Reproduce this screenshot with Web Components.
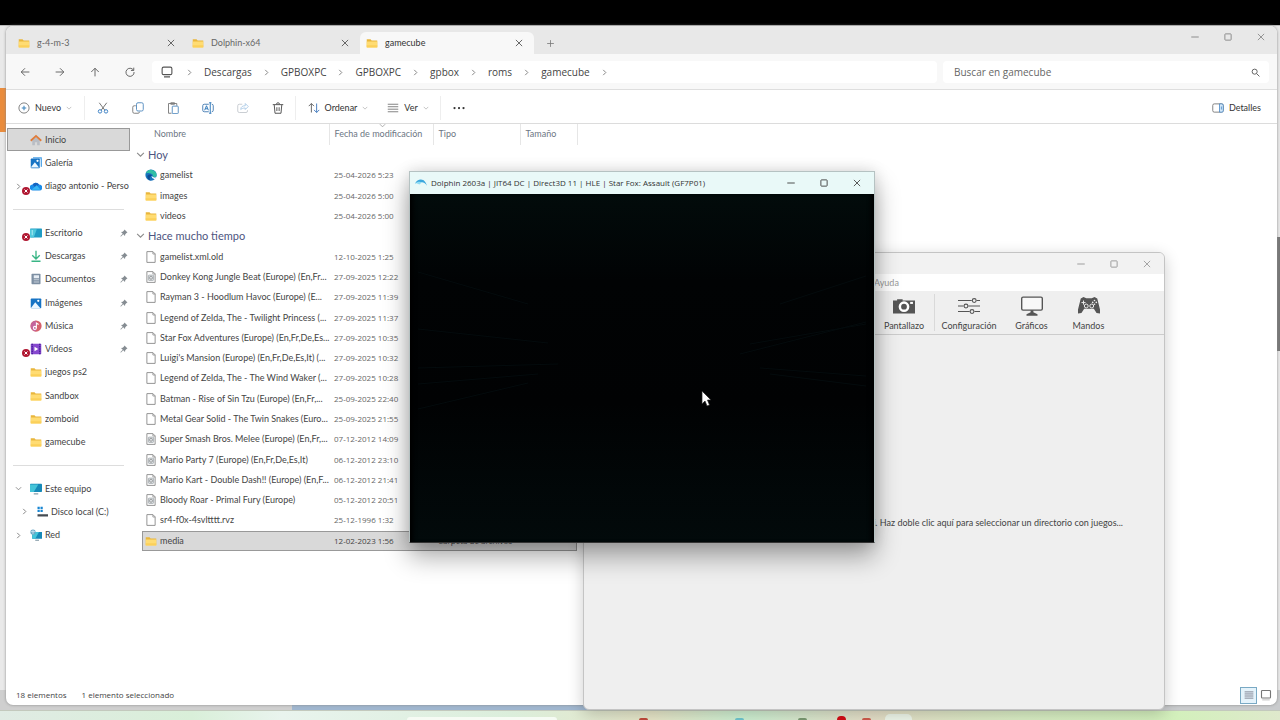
<!DOCTYPE html>
<html lang="es">
<head>
<meta charset="utf-8">
<title>gamecube</title>
<style>
html, body { margin: 0; height: 100%; overflow: hidden; background: #000; }
body { font-family: Lato, "Open Sans", sans-serif; font-size: 9px; line-height: 14px; color: #444; --small: 8px/14px "Open Sans", sans-serif; }
</style>
</head>
<body>
<desk-top>
  <explorer-window slot="windows" class="explorer"></explorer-window>
  <emulator-window slot="windows" class="emulator"></emulator-window>
  <game-window slot="windows" class="game"></game-window>
</desk-top>
<script>
const ICONS = {
  folder: '<path d="M1 3h5l1.500 1.500H15V13H1z" fill="#e9b63c"/><path d="M1 6h14v8H1z" fill="#ffdc73"/><path d="M1 11h14v3H1z" fill="#fbd05a"/>',
  close: '<path d="M3 3l10 10M13 3L3 13" stroke="currentColor" stroke-width="1.400"/>',
  min: '<path d="M2 8h12" stroke="currentColor" stroke-width="1.500"/>',
  max: '<rect x="3" y="3" width="10" height="10" rx="1" stroke="currentColor" stroke-width="1.500"/>',
  plus: '<path d="M8 2v12M2 8h12" stroke="currentColor" stroke-width="1.400"/>',
  back: '<path d="M15 8H2M8 2L2 8l6 6" stroke="currentColor" stroke-width="1.400"/>',
  forward: '<path d="M1 8h13M8 2l6 6-6 6" stroke="currentColor" stroke-width="1.400"/>',
  up: '<path d="M8 15V2M2 8l6-6 6 6" stroke="currentColor" stroke-width="1.400"/>',
  reload: '<path d="M13.500 5A6.500 6.500 0 1 0 14.500 8M14 1v4.500H9.500" stroke="currentColor" stroke-width="1.400"/>',
  monitor: '<rect x="1.500" y="1.500" width="13" height="10" rx="2" stroke="currentColor" stroke-width="1.500"/><path d="M4 14.500h8" stroke="currentColor" stroke-width="1.500"/>',
  right: '<path d="M5 2l6 6-6 6" stroke="currentColor" stroke-width="2"/>',
  down: '<path d="M2 5l6 6 6-6" stroke="currentColor" stroke-width="1.800"/>',
  search: '<circle cx="6.500" cy="6.500" r="4.500" stroke="currentColor" stroke-width="1.600"/><path d="M10 10l5 5" stroke="currentColor" stroke-width="1.600"/>',
  add: '<circle cx="8" cy="8" r="6.800" stroke="#777" stroke-width="1.200"/><path d="M8 5v6M5 8h6" stroke="#3b83bd" stroke-width="1.400"/>',
  cut: '<path d="M3 1l7.500 10M13 1L5.500 11" stroke="#666" stroke-width="1.200"/><circle cx="4" cy="12.500" r="2.300" stroke="#3d82c4" stroke-width="1.300"/><circle cx="12" cy="12.500" r="2.300" stroke="#3d82c4" stroke-width="1.300"/>',
  copy: '<path d="M5 5H3a2 2 0 0 0-2 2v6a2 2 0 0 0 2 2h5a2 2 0 0 0 2-2" stroke="#777" stroke-width="1.200"/><rect x="6" y="1" width="9" height="11" rx="2" stroke="#5c91c2" stroke-width="1.300"/>',
  paste: '<path d="M6 15H2V2h11v3M5 1h5v2H5z" stroke="#777" stroke-width="1.200"/><rect x="7" y="5.500" width="8" height="10" rx="1" stroke="#5c91c2" stroke-width="1.300"/>',
  rename: '<path d="M9 3H3a2 2 0 0 0-2 2v6a2 2 0 0 0 2 2h6M13 3a2 2 0 0 1 2 2v6a2 2 0 0 1-2 2" stroke="#4d82b5" stroke-width="1.300"/><path d="M11 1v14M9.500 1h3M9.500 15h3M3.500 11L6 5l2.500 6M4.500 9h3" stroke="#2f78ba" stroke-width="1.300"/>',
  share: '<path d="M7 3H3a2 2 0 0 0-2 2v7a2 2 0 0 0 2 2h9a2 2 0 0 0 2-2v-1" stroke="#c9cdd2" stroke-width="1.300"/><path d="M5 10c0-4 3-5 6-5V2l4 4-4 4V8C8 8 6 9 5 10z" stroke="#a9c9e6" stroke-width="1.200"/>',
  trash: '<path d="M1 3.500h14M6 3a2 2 0 0 1 4 0M3 4l1 11h8l1-11M6.500 7v5M9.500 7v5" stroke="#555" stroke-width="1.300"/>',
  sort: '<path d="M4.500 14V2M1 5.500L4.500 2 8 5.500" stroke="#666" stroke-width="1.300"/><path d="M11.500 2v12M8 10.500l3.500 3.500 3.500-3.500" stroke="#4a80c0" stroke-width="1.300"/>',
  lines: '<path d="M1 3h14M1 6.300h14M1 9.600h14M1 13h14" stroke="currentColor" stroke-width="1.200"/>',
  dots: '<g fill="#333"><circle cx="2" cy="8" r="1.500"/><circle cx="8" cy="8" r="1.500"/><circle cx="14" cy="8" r="1.500"/></g>',
  panel: '<rect x="1" y="2.500" width="14" height="11" rx="2" stroke="#777" stroke-width="1.200"/><path d="M10 2.500h3a2 2 0 0 1 2 2v7a2 2 0 0 1-2 2h-3z" stroke="#3d82c4" fill="#d5e8f8"/><path d="M12.500 6v4" stroke="#3d82c4"/>',
  home: '<path d="M3 8v7h3.500v-4h3v4H13V8L8 3.500z" fill="#b9bdc4"/><path d="M1 9l7-6.500L15 9" stroke="#e07c3a" stroke-width="2.400"/>',
  gallery: '<path d="M3 2h12v11h1V3z" fill="#6ab0ea"/><path d="M4 1h11v12" stroke="#4aa0e6" stroke-width="1.500"/><rect x="1" y="2" width="12" height="13" rx="1" fill="#1673c4"/><path d="M1 14l5.500-7L12 14z" fill="#eaf6ff"/><circle cx="10" cy="5" r="1.500" fill="#fff"/>',
  cloud: '<path d="M4 14a4 4 0 0 1-.5-8A5 5 0 0 1 12 6a4 4 0 0 1 .5 8z" fill="#1a8be8"/><path d="M3.500 6A5 5 0 0 1 12 6L7 10z" fill="#1663c0"/><path d="M2 13l7-6 5 6z" fill="#38b6f4"/>',
  desktop: '<rect x="0" y="2" width="16" height="12" rx="1" fill="#1f9cc4"/><path d="M0 3h9L5 14H0z" fill="#50c8dc"/><path d="M3 4v7" stroke="#c5f4f8"/>',
  download: '<path d="M8 1v10M3 7l5 5 5-5M2 15h12" stroke="#39b585" stroke-width="1.800"/>',
  document: '<rect x="2" y="1" width="12" height="14" rx="1" fill="#7d8fa3"/><path d="M5 3h7v4H5z" fill="#e6edf4"/><path d="M5 9h7M5 12h7" stroke="#dfe6ee"/>',
  picture: '<rect x="1" y="2" width="14" height="13" rx="1" fill="#1673c4"/><path d="M1 15l6-8 7 8z" fill="#eaf6ff"/><circle cx="11" cy="5" r="1.500" fill="#fff"/>',
  music: '<circle cx="8" cy="8" r="7.500" fill="#d6616b"/><path d="M1 8a7 7 0 0 1 7-7v14a7 7 0 0 1-7-7z" fill="#c3659c"/><circle cx="6.500" cy="10.500" r="2" stroke="#fff" stroke-width="1.400"/><path d="M8.500 10.500V4l3 2" stroke="#fff" stroke-width="1.400"/>',
  video: '<rect x="1" y="1" width="14" height="14" rx="1" fill="#8748cf"/><path d="M3 1v14M13 1v14" stroke="#4c259b" stroke-width="2" stroke-dasharray="2 1"/><path d="M6 5l5 3-5 3z" fill="#fff"/>',
  pc: '<rect x="0" y="1" width="16" height="11" rx="1" fill="#1689b8"/><path d="M0 2h11L5 12H0z" fill="#44c4d8"/><path d="M5 14.500h6" stroke="#7b93a1" stroke-width="1.500"/>',
  disk: '<g fill="#1685d2"><path d="M2 1h3v3H2zM6 1h3v3H6zM2 5h3v3H2zM6 5h3v3H6z"/></g><path d="M2 11h14v3H2z" fill="#454b52"/>',
  network: '<rect x="3" y="4" width="13" height="9" fill="#1689b8"/><path d="M3 4h9l-5 9H3z" fill="#44c4d8"/><circle cx="4" cy="4" r="3.500" fill="#6aa6c4"/><path d="M1 3.500h6M4 1v6" stroke="#d5eef8"/><path d="M7 15h5" stroke="#7b93a1" stroke-width="1.500"/>',
  pin: '<path d="M9 1l6 6-2 1-2.500 2.500L10 14 6.500 10.500 2 15l-1 0 0-1 4.500-4.500L2 6l3.500-.5L8 3z" fill="#858c92"/>',
  edge: '<circle cx="8" cy="8" r="7.500" fill="#1673bd"/><path d="M1 6a7.500 7.500 0 0 1 14.500 2.500c0 2.500-5 3-5 .5 0-3-5.500-4.500-9.500-3z" fill="#31bfa5"/><path d="M9 9c0-2-5-3-6 1 0 3 3 5.500 5 5.500-2-1-3-5 1-6.500z" fill="#0e4d94"/><path d="M9 9c2 3 4 2.500 6.300 1.500-.5 1.500-1 2-2 3-2 0-5-2-4.300-4.500z" fill="#fff"/>',
  page: '<path d="M2.500 .8h8l3 3v11.400h-11z" fill="#fff" stroke="#8a8a8a" stroke-width="1.200"/><path d="M10.500 1v3h3" stroke="#8a8a8a"/>',
  image: '<path d="M2.500 .8h8l3 3v11.400h-11z" fill="#fff" stroke="#8a8a8a" stroke-width="1.200"/><path d="M10.500 1v3h3" stroke="#8a8a8a"/><rect x="4.500" y="5.500" width="7" height="7" rx="1" fill="#dfe3e6" stroke="#9aa0a5"/><circle cx="8" cy="9" r="2" stroke="#888"/>',
  dolphin: '<path d="M0 9c2-5 6-6 9-5.500 3 0 5 2.500 7 8-3-4-5-5-8-4.500C5 7 2 7.500 0 9z" fill="#3ba7dd"/><path d="M1 8c3-2 6-2 8-1L6 10z" fill="#8edcf4"/>',
  camera: '<path d="M0 4h3V3h4v1h9v9.500H0z" fill="#555"/><circle cx="8" cy="8.500" r="3" fill="#555" stroke="#fff" stroke-width="1.800"/><path d="M12.500 5h2v1.500h-2z" fill="#fff"/>',
  sliders: '<path d="M0 4h10M13.500 4H16M0 8h4M7.500 8H16M0 12h8.500M12 12h4" stroke="#555" stroke-width=".8"/><g stroke="#555" stroke-width=".8"><circle cx="11.800" cy="4" r="1.400"/><circle cx="5.800" cy="8" r="1.400"/><circle cx="10.200" cy="12" r="1.400"/></g>',
  screen: '<rect x=".5" y="1.500" width="15" height="9.500" rx="1" fill="#f8f8f8" stroke="#555"/><path d="M7 11h2v1.500l3 1.500v1H4v-1l3-1.500z" fill="#555"/>',
  pad: '<path d="M2 2.500l2-1 2 .8h4l2-.8 2 1 2 8v3l-2.500-.5-2-3h-7l-2 3-2.500.5v-3z" fill="#555"/><g stroke="#eee" stroke-width=".7"><circle cx="6" cy="8" r="1.400"/><circle cx="10" cy="8" r="1.400"/><path d="M2.500 5.500h3M4 4v3"/></g><g fill="#eee"><circle cx="12" cy="4" r=".6"/><circle cx="13.300" cy="5.400" r=".6"/><circle cx="10.700" cy="5.400" r=".6"/><circle cx="12" cy="6.700" r=".6"/></g>',
  thumb: '<rect x="2" y="2" width="12" height="10" rx="1" stroke="#777" stroke-width="1.500"/><path d="M3 14.500h10" stroke="#aaa"/>',
  error: '<circle cx="8" cy="8" r="8" fill="#b01832"/><path d="M5 5l6 6M11 5l-6 6" stroke="#fff" stroke-width="2"/>'
};

const RESET = `
  * { box-sizing: border-box; }
  button, input { font: inherit; color: inherit; border: 0; padding: 0; margin: 0; background: none; outline: 0; }
  a { color: inherit; text-decoration: none; }
  ul { list-style: none; margin: 0; padding: 0; }
`;

function define(name, render) {
  customElements.define(name, class extends HTMLElement {
    connectedCallback() {
      if (this.shadowRoot) return;
      this.attachShadow({ mode: 'open' }).innerHTML = render(this);
    }
  });
}
const icon = (name, size = 12, cls = '') =>
  `<ui-icon name="${name}" class="${cls}" style="--size:${size}px"></ui-icon>`;

define('ui-icon', el => `
  <style>
    :host { display: inline-block; flex: none; width: var(--size, 12px); height: var(--size, 12px); }
    svg { display: block; width: 100%; height: 100%; }
  </style>
  <svg viewBox="0 0 16 16" fill="none" aria-hidden="true">${ICONS[el.getAttribute('name')]}</svg>`);

define('window-controls', () => `
  <style>${RESET}
    :host { display: flex; color: var(--control, #888); }
    button { display: grid; place-items: center; width: 33px; height: 22px; }
  </style>
  <button aria-label="Minimizar">${icon('min', 10)}</button>
  <button aria-label="Maximizar">${icon('max', 10)}</button>
  <button aria-label="Cerrar">${icon('close', 10)}</button>`);

define('desk-top', () => `
  <style>
    :host { display: flex; flex-direction: column; height: 100vh; position: relative; }
    .letterbox { height: 25px; background: #000; }
    .wall { flex: 1; background: #e9e9e9; display: flex; flex-direction: column; justify-content: space-between; border-top: 1px solid #bbb; }
    .edge { display: flex; justify-content: space-between; padding-top: 62px; }
    .orange { width: 6px; height: 44px; background: #ea8c3c; }
    .thumb { width: 3px; height: 114px; margin-top: 149px; background: #777; }
    .strip { height: 20px; background: linear-gradient(90deg, #cfcfcf 292px, #9fb6cf 292px 600px, #c9cbcd 600px); }
    .bar { height: 9px; padding-left: 38px; border-top: 1px solid #c3c9bd; display: flex; align-items: flex-end; justify-content: center; gap: 82px; overflow: hidden;
      background: linear-gradient(90deg, #e0ebe4, #d9efd9 15%, #e9f4ee 22%, #dbeedb 40%, #e7e6c8 51%, #cdf0d2 58%, #e5dfc8 68%, #d9eec4 80%, #d3f0bc 92%, #dfe9cc); }
    .pill { width: 150px; height: 3px; background: #f6fbf4; border-radius: 4px 4px 0 0; }
    .apps { display: flex; align-items: flex-end; gap: 39px; }
    .apps i { width: 9px; height: 2px; border-radius: 5px 5px 0 0; background: #c24a3c; }
    .apps i:nth-child(2) { background: #6fc6cf; margin-left: 48px; }
    .apps i:nth-child(3) { background: #7b9a72; margin-left: 15px; }
    .apps i:nth-child(4) { background: #d30d16; height: 4px; margin-left: -9px; }
    .apps i:nth-child(5) { background: #cf5a4c; margin-left: -23px; }
    .apps i:nth-child(6) { background: #eef7ea; width: 27px; height: 6px; margin-left: -25px; }
    ::slotted(*) { position: absolute; box-sizing: border-box; }
    ::slotted(.explorer) { left: 6px; right: 3px; top: 26px; bottom: 15px; }
    ::slotted(.emulator) { left: 583px; width: 582px; top: 252px; bottom: 10px; }
    ::slotted(.game) { left: 409px; width: 466px; top: 171px; height: 372px; }
    .cursor { position: absolute; left: 701px; top: 390px; width: 11px; height: 17px; }
  </style>
  <div class="letterbox"></div>
  <div class="wall">
    <div class="edge"><div class="orange"></div><div class="thumb"></div></div>
    <div class="strip"></div>
  </div>
  <div class="bar"><div class="pill"></div><div class="apps"><i></i><i></i><i></i><i></i><i></i><i></i></div></div>
  <slot name="windows"></slot>
  <svg class="cursor" viewBox="0 0 11 17" aria-hidden="true"><path d="M1 1v13l3-3 2 5 2.500-1-2-5H10z" fill="#fff" stroke="#222" stroke-width=".7"/></svg>`);

define('tab-item', el => `
  <style>${RESET}
    :host { display: flex; align-items: center; width: 174px; height: 22px; padding: 0 10px 0 6px; border-radius: 6px 6px 0 0; color: #666; }
    :host([active]) { background: #f8f8f8; color: #333; }
    .tab { flex: 1; display: flex; align-items: center; gap: 7px; text-align: left; }
    .x { display: grid; color: #555; }
  </style>
  <button class="tab" role="tab">${icon('folder', 12)}<slot></slot></button>
  <button class="x" aria-label="Cerrar pestaña">${icon('close', 10)}</button>`);

define('path-bar', () => `
  <style>${RESET}
    :host { display: flex; align-items: center; flex: none; height: 36px; padding: 1px 8px 0 1px; background: #f8f8f8; border-bottom: 1px solid #dedede; font-family: "Open Sans", sans-serif; font-size: 10px; color: #555; }
    .nav { display: flex; width: 145px; }
    .nav button { width: 35px; height: 22px; display: grid; place-items: center; }
    .crumbs { flex: 1; display: flex; align-items: center; height: 22px; padding-left: 9px; background: #fff; border-radius: 4px; color: #444; }
    .crumbs li { display: flex; align-items: center; }
    .crumbs ul { display: flex; }
    .crumbs ui-icon { margin: 0 11px; color: #777; }
    .crumbs ui-icon.pc { margin: 0 2px 0 0; color: #555; }
    label { width: 326px; height: 22px; margin-left: 6px; padding: 0 9px 0 11px; display: flex; align-items: center; background: #fff; border-radius: 4px; }
    input { flex: 1; min-width: 0; }
    input::placeholder { color: #666; opacity: 1; }
  </style>
  <div class="nav">${['back', 'forward', 'up', 'reload'].map(n => `<button aria-label="${n}">${icon(n, 10)}</button>`).join('')}</div>
  <nav class="crumbs">${icon('monitor', 12, 'pc')}${icon('right', 7)}<ul>${['Descargas', 'GPBOXPC', 'GPBOXPC', 'gpbox', 'roms', 'gamecube'].map(t => `<li><a href="#">${t}</a>${icon('right', 7)}</li>`).join('')}</ul></nav>
  <label><input type="search" aria-label="Buscar" placeholder="Buscar en gamecube">${icon('search', 9)}</label>`);

define('command-bar', () => `
  <style>${RESET}
    :host { display: flex; align-items: center; flex: none; height: 34px; padding: 2px 16px 0 12px; border-bottom: 1px solid #dcdcdc; background: #fff; color: #333; }
    button { display: flex; align-items: center; justify-content: center; height: 24px; gap: 5px; }
    .tool { width: 35px; }
    .drop ui-icon:last-child { color: #aaa; }
    .sep { width: 1px; height: 24px; background: #eee; }
    .new { width: 66px; justify-content: flex-start; }
    .sort { width: 62px; margin-left: 11px; }
    .view { width: 42px; margin: 0 11px 0 18px; }
    .end { margin-left: auto; }
    .view ui-icon { color: #777; }
  </style>
  <button class="drop new">${icon('add', 12)}Nuevo${icon('down', 6)}</button><span class="sep"></span>
  ${['cut', 'copy', 'paste', 'rename', 'share', 'trash'].map(n => `<button class="tool" aria-label="${n}">${icon(n, 12)}</button>`).join('')}
  <span class="sep"></span>
  <button class="drop sort">${icon('sort', 12)}Ordenar${icon('down', 6)}</button>
  <button class="drop view">${icon('lines', 12)}Ver${icon('down', 6)}</button><span class="sep"></span>
  <button class="tool" aria-label="Más">${icon('dots', 12)}</button>
  <button class="end">${icon('panel', 12)}Detalles</button>`);

define('nav-item', el => {
  const a = n => el.getAttribute(n);
  return `
  <style>${RESET}
    :host { display: block; min-height: 0; min-width: 0; }
    a { display: flex; align-items: center; height: 100%; padding: 0 0 0 7px; position: relative; border: 1px solid transparent; border-right-width: 0; white-space: nowrap; overflow: hidden; }
    :host([selected]) a { background: #d9d9d9; border: 1px solid #999; }
    :host([sub]) a { padding-left: 13px; }
    .fold { width: 15px; display: flex; color: #777; flex: none; }
    .fold ui-icon { margin-right: auto; }
    .text { margin-left: 3px; flex: 1; overflow: hidden; }
    .badge { position: absolute; left: 14px; top: 11px; }
    .pin { margin-right: 2px; }
  </style>
  <a href="#"><span class="fold">${a('fold') ? icon(a('fold'), 7) : ''}</span>${icon(a('icon'), 12)}<span class="text"><slot></slot></span>
  ${el.hasAttribute('pinned') ? icon('pin', 8, 'pin') : ''}${el.hasAttribute('error') ? icon('error', 8, 'badge') : ''}</a>`;
});

define('side-bar', () => `
  <style>
    :host { display: block; width: 124px; flex: none; padding: 4px 0 0 1px; }
    .group { display: grid; grid-auto-rows: 1fr; grid-template-columns: minmax(0, 1fr); }
    .short { height: 70px; }
    .long { height: 233px; }
    hr { border: 0; height: 1px; background: #ddd; margin: 11px 6px; }
  </style>
  <nav>
    <div class="group short">
      <nav-item icon="home" selected>Inicio</nav-item>
      <nav-item icon="gallery">Galería</nav-item>
      <nav-item icon="cloud" fold="right" error>diago antonio - Perso</nav-item>
    </div><hr>
    <div class="group long">
      <nav-item icon="desktop" pinned error>Escritorio</nav-item>
      <nav-item icon="download" pinned>Descargas</nav-item>
      <nav-item icon="document" pinned>Documentos</nav-item>
      <nav-item icon="picture" pinned>Imágenes</nav-item>
      <nav-item icon="music" pinned>Música</nav-item>
      <nav-item icon="video" pinned error>Videos</nav-item>
      <nav-item icon="folder">juegos ps2</nav-item>
      <nav-item icon="folder">Sandbox</nav-item>
      <nav-item icon="folder">zomboid</nav-item>
      <nav-item icon="folder">gamecube</nav-item>
    </div><hr>
    <div class="group short">
      <nav-item icon="pc" fold="down">Este equipo</nav-item>
      <nav-item icon="disk" fold="right" sub>Disco local (C:)</nav-item>
      <nav-item icon="network" fold="right">Red</nav-item>
    </div>
  </nav>`);

const FILES = [
  ['Hoy'],
  ['edge', 'gamelist', '25-04-2026 5:23'],
  ['folder', 'images', '25-04-2026 5:00'],
  ['folder', 'videos', '25-04-2026 5:00'],
  ['Hace mucho tiempo'],
  ['page', 'gamelist.xml.old', '12-10-2025 1:25'],
  ['image', 'Donkey Kong Jungle Beat (Europe) (En,Fr...', '27-09-2025 12:22'],
  ['page', 'Rayman 3 - Hoodlum Havoc (Europe) (E...', '27-09-2025 11:39'],
  ['page', 'Legend of Zelda, The - Twilight Princess (...', '27-09-2025 11:37'],
  ['page', 'Star Fox Adventures (Europe) (En,Fr,De,Es...', '27-09-2025 10:35'],
  ['page', "Luigi's Mansion (Europe) (En,Fr,De,Es,It) (...", '27-09-2025 10:32'],
  ['page', 'Legend of Zelda, The - The Wind Waker (...', '27-09-2025 10:28'],
  ['page', 'Batman - Rise of Sin Tzu (Europe) (En,Fr,...', '25-09-2025 22:40'],
  ['page', 'Metal Gear Solid - The Twin Snakes (Euro...', '25-09-2025 21:55'],
  ['image', 'Super Smash Bros. Melee (Europe) (En,Fr,...', '07-12-2012 14:09'],
  ['image', 'Mario Party 7 (Europe) (En,Fr,De,Es,It)', '06-12-2012 23:10'],
  ['image', 'Mario Kart - Double Dash!! (Europe) (En,F...', '06-12-2012 21:41'],
  ['image', 'Bloody Roar - Primal Fury (Europe)', '05-12-2012 20:51'],
  ['page', 'sr4-f0x-4svltttt.rvz', '25-12-1996 1:32'],
  ['folder', 'media', '12-02-2023 1:56', 'Carpeta de archivos']
];
define('file-list', () => `
  <style>${RESET}
    :host { display: block; flex: 1; min-width: 0; padding-left: 12px; }
    table { border-collapse: collapse; table-layout: fixed; width: 435px; height: 427px; }
    th, td { padding: 0; font-weight: 400; text-align: left; white-space: nowrap; }
    thead tr { height: 21px; }
    thead th { color: #6c7683; border-right: 1px solid #e6e6e6; padding: 0 0 2px 5px; position: relative; }
    thead th:first-child { padding-left: 12px; }
    .caret { position: absolute; left: 49px; top: -2px; color: #999; }
    tbody tr { height: 20px; }
    .group th { font-size: 11px; color: #4d5580; padding-left: 0; }
    .group th ui-icon { margin: 0 3px 0 -6px; color: #888; }
    .name { display: flex; align-items: center; gap: 3px; height: 18px; padding-left: 3px; color: #444; }
    td { padding: 1px 0; background-clip: content-box; }
    .date { display: flex; align-items: center; height: 18px; font: var(--small); padding-left: 5px; color: #666; }
    .sel td { background-color: #d9d9d9; }
    .sel .date { color: #444; }
    .sel { outline: 1px solid #999; outline-offset: -1px; }
  </style>
  <table>
    <colgroup><col style="width:187px"><col style="width:104px"><col style="width:87px"><col style="width:57px"></colgroup>
    <thead><tr><th>Nombre</th><th>${icon('down', 7, 'caret')}Fecha de modificación</th><th>Tipo</th><th>Tamaño</th></tr></thead>
    <tbody>${FILES.map(f => f.length === 1
      ? `<tr class="group"><th colspan="4">${icon('down', 9)}${f[0]}</th></tr>`
      : `<tr class="${f[3] ? 'sel' : ''}"><td><span class="name">${icon(f[0], 12)}<span>${f[1]}</span></span></td><td><span class="date">${f[2]}</span></td><td><span class="date">${f[3] || ''}</span></td><td></td></tr>`).join('')}
    </tbody>
  </table>`);

define('explorer-window', () => `
  <style>${RESET}
    :host { display: flex; flex-direction: column; background: #fff; border-radius: 7px; overflow: hidden; box-shadow: 0 0 3px #888; }
    header { display: flex; height: 28px; flex: none; background: #e8e8e8; padding-left: 6px; }
    .tabs { display: flex; align-items: flex-end; }
    .add { width: 33px; height: 22px; display: grid; place-items: center; align-self: flex-end; color: #777; }
    window-controls { margin-left: auto; }
    main { display: flex; flex: 1; min-height: 0; }
    footer { height: 20px; flex: none; display: flex; align-items: center; gap: 15px; padding: 0 4px 0 10px; color: #444; }
    footer span { font: var(--small); }
    .modes { display: flex; align-items: center; margin-left: auto; gap: 2px; }
    .modes button { display: grid; place-items: center; width: 14px; height: 17px; }
    .modes .on { width: 17px; background: #e5f3fb; border: 1px solid #79a9c4; color: #667; }
  </style>
  <header>
    <div class="tabs" role="tablist"><tab-item>g-4-m-3</tab-item><tab-item>Dolphin-x64</tab-item><tab-item active>gamecube</tab-item></div>
    <button class="add" aria-label="Nueva pestaña">${icon('plus', 9)}</button>
    <window-controls></window-controls>
  </header>
  <path-bar></path-bar>
  <command-bar></command-bar>
  <main><side-bar></side-bar><file-list></file-list></main>
  <footer><span>18 elementos</span><span>1 elemento seleccionado</span>
    <div class="modes"><button class="on" aria-label="Detalles">${icon('lines', 10)}</button><button aria-label="Iconos">${icon('thumb', 12)}</button></div>
  </footer>`);

define('emulator-window', () => `
  <style>${RESET}
    :host { display: flex; flex-direction: column; background: #efefef; border: 1px solid #c4c4c4; border-radius: 6px; overflow: hidden; box-shadow: 0 4px 16px #0003; --control: #999; }
    header { display: flex; align-items: center; justify-content: flex-end; height: 21px; flex: none; background: #f2f2f2; padding-right: 1px; }
    .menu { height: 17px; flex: none; background: #fff; display: flex; align-items: center; padding-left: 50%; color: #999; }
    .tools { display: flex; flex: none; height: 44px; padding-left: 50%; border-bottom: 1px solid #ccc; color: #444; }
    .tools button { display: flex; flex-direction: column; align-items: center; justify-content: center; gap: 2px; width: 57px; padding-top: 2px; }
    .tools button.shot { width: 60px; }
    .tools button.wide { width: 68px; }
    .sep { width: 1px; margin: 3px 0; background: #d9d9d9; }
    .list { flex: 1; display: flex; align-items: center; justify-content: flex-end; padding: 2px 41px 0 0; color: #444; }
  </style>
  <header><window-controls></window-controls></header>
  <div class="menu"><button>Ayuda</button></div>
  <div class="tools">
    <button class="shot">${icon('camera', 22)}Pantallazo</button><span class="sep"></span>
    <button class="wide">${icon('sliders', 22)}Configuración</button>
    <button>${icon('screen', 22)}Gráficos</button>
    <button>${icon('pad', 22)}Mandos</button>
  </div>
  <div class="list">Wii. Haz doble clic aquí para seleccionar un directorio con juegos...</div>`);

define('game-window', () => `
  <style>
    :host { display: flex; flex-direction: column; background: #000; border: 1px solid #b5c2c2; border-bottom-color: #333; box-shadow: 0 14px 24px #0005, 0 0 14px #0002; --control: #444; }
    header { display: flex; align-items: center; height: 22px; flex: none; padding: 0 1px 0 5px; background: #e9f9f8; color: #333; }
    header > span { margin-left: 4px; flex: 1; white-space: nowrap; font: var(--small); }
    .view { flex: 1; min-height: 0; background: linear-gradient(#020b0b, #010304 25%, #010203 60%, #020a0b); box-shadow: inset 5px 0 4px -2px #000, inset -5px 0 4px -2px #000; }
    svg { display: block; width: 100%; height: 100%; }
  </style>
  <header>${icon('dolphin', 12)}<span>Dolphin 2603a | JIT64 DC | Direct3D 11 | HLE | Star Fox: Assault (GF7P01)</span><window-controls></window-controls></header>
  <div class="view"><svg viewBox="0 0 464 348" preserveAspectRatio="none" fill="none" stroke="#040b0d" aria-hidden="true"><path d="M8 78l110 32M8 135l130 14M8 174l140-4M8 190l120-10M8 215l110-26M340 150l116-20M330 160l126-32M350 174l106 8M360 180l96 12M370 110l86-28"/></svg></div>`);
</script>
</body>
</html>
